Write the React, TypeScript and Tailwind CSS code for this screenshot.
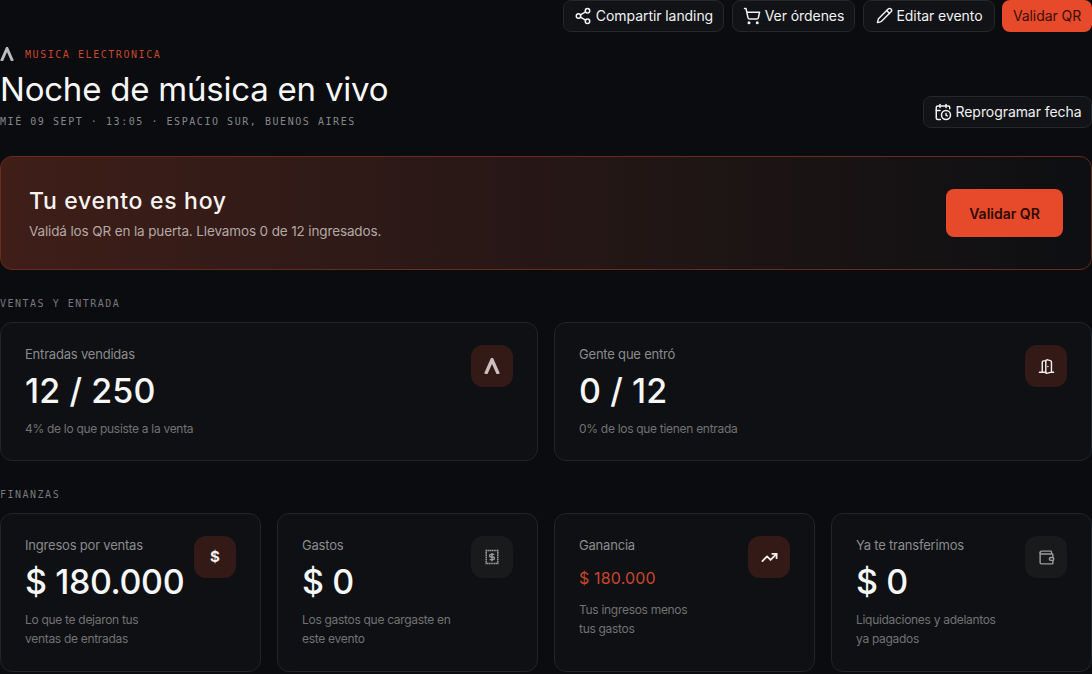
import React from 'react';
import { Share2, ShoppingCart, Pencil, CalendarClock, DoorOpen, TrendingUp, Wallet } from 'lucide-react';

const sans = "font-['Inter','Noto_Sans',sans-serif]";
const mono = "font-['DejaVu_Sans_Mono','Liberation_Mono',monospace]";

const Lambda: React.FC<{ className?: string }> = ({ className }) => (
  <svg viewBox="0 0 14 14" className={className} fill="none" stroke="currentColor" strokeWidth="2.9">
    <path d="M1.5 14 L7 1.5 L12.5 14" />
  </svg>
);

const ReceiptDollar: React.FC<{ className?: string }> = ({ className }) => (
  <svg viewBox="0 0 16 16" className={className} fill="none" stroke="currentColor">
    <rect x="2.2" y="1.5" width="11.6" height="13" strokeWidth="1.5" strokeDasharray="1.4 .4" />
    <path d="M10.3 5.4 H6.9 a1.3 1.3 0 0 0 0 2.6 h2.2 a1.3 1.3 0 0 1 0 2.6 H5.7 M8 4 v8.2" strokeWidth="1.4" />
  </svg>
);

const TopButton: React.FC<{ icon: React.ReactNode; label: string; className?: string }> = ({ icon, label, className }) => (
  <button
    type="button"
    className={`flex h-8 items-center justify-center gap-1 rounded-lg border border-[#24272b] bg-[#111316] pb-px text-[14px] tracking-[-0.005em] text-[#f2f2f2] ${className}`}
  >
    {icon}
    {label}
  </button>
);

const SectionLabel: React.FC<{ children: React.ReactNode }> = ({ children }) => (
  <p className={`${mono} text-[10px] leading-[14px] tracking-[1.5px] text-[#77797c]`}>{children}</p>
);

interface StatCardProps {
  label: string;
  value: string;
  sub: React.ReactNode;
  icon: React.ReactNode;
  accent?: boolean;
  small?: boolean;
}

const StatCard: React.FC<StatCardProps> = ({ label, value, sub, icon, accent, small }) => (
  <div className="relative rounded-xl border border-[#212428] bg-[#0e1014] px-6 pt-[21px]">
    <div
      className={`absolute right-6 top-[22px] flex h-[42px] w-[42px] items-center justify-center rounded-xl ${
        accent ? 'bg-[#341a17] text-[#f5f0ee]' : 'bg-[#181a1c] text-[#9a9b9d]'
      }`}
    >
      {icon}
    </div>
    <p className="text-[13px] leading-5 tracking-[-0.2px] text-[#8b8b8c]">{label}</p>
    {small ? (
      <p className="mt-[11px] text-[16px] leading-6 tracking-[0.01em] text-[#c9472b]">{value}</p>
    ) : (
      <p
        className={`mt-[7px] text-[34px] font-medium leading-10 text-[#f7f7f7] ${
          value.startsWith('$') ? 'tracking-[-0.4px]' : 'tracking-[0.1px]'
        }`}
      >
        {value}
      </p>
    )}
    <p className={`${small ? 'mt-[10px]' : 'mt-2'} text-[12px] leading-[19px] tracking-[-0.3px] text-[#727273]`}>{sub}</p>
  </div>
);

export default function App() {
  return (
    <div className={`${sans} h-[674px] overflow-hidden bg-[#0a0c0f]`}>
      {/* Acciones */}
      <div className="flex justify-end gap-2">
        <TopButton className="w-[161px]" icon={<Share2 size={18} />} label="Compartir landing" />
        <TopButton className="w-[123px]" icon={<ShoppingCart size={18} />} label="Ver órdenes" />
        <TopButton className="w-[132px]" icon={<Pencil size={17} />} label="Editar evento" />
        <button
          type="button"
          className="-ml-px h-8 w-[90px] rounded-lg bg-[#e64a2a] pb-px text-[14px] tracking-[-0.005em] text-[#3a0f07]"
        >
          Validar QR
        </button>
      </div>

      {/* Encabezado */}
      <div className="mt-[14px] flex items-end justify-between">
        <div className="-mb-px">
          <div className="flex h-4 items-center gap-[11px]">
            <Lambda className="h-[14px] w-[14px] text-[#bdbdbd]" />
            <span className={`${mono} text-[10px] tracking-[1.55px] text-[#c9472b]`}>MUSICA ELECTRONICA</span>
          </div>
          <h1 className="mt-[7px] text-[33px] leading-10 tracking-[-0.22px] text-[#f7f7f7]">Noche de música en vivo</h1>
          <p className={`${mono} mt-[6px] text-[10px] leading-[14px] tracking-[1.55px] text-[#86878a]`}>
            MIÉ 09 SEPT · 13:05 · ESPACIO SUR, BUENOS AIRES
          </p>
        </div>
        <TopButton className="w-[169px]" icon={<CalendarClock size={18} />} label="Reprogramar fecha" />
      </div>

      {/* Banner */}
      <div className="mt-7 flex h-[114px] items-center justify-between rounded-xl border border-[#6a2a1c] bg-gradient-to-r from-[#3f1e18] to-[#0d0f12] pl-[28px] pr-[28px]">
        <div className="pt-[2px]">
          <h2 className="text-[23px] font-medium leading-7 tracking-[0.03em] text-[#f7f3f1]">Tu evento es hoy</h2>
          <p className="mt-[6px] text-[13.5px] leading-5 tracking-[-0.13px] text-[#b3a9a6]">Validá los QR en la puerta. Llevamos 0 de 12 ingresados.</p>
        </div>
        <button
          type="button"
          className="h-12 w-[117px] rounded-lg bg-[#e64a2a] text-[14px] font-semibold text-[#2f0c05]"
        >
          Validar QR
        </button>
      </div>

      {/* Ventas */}
      <div className="mt-[27px]">
        <SectionLabel>VENTAS Y ENTRADA</SectionLabel>
      </div>
      <div className="mt-[11px] grid h-[139px] grid-cols-2 gap-4">
        <StatCard
          accent
          label="Entradas vendidas"
          value="12 / 250"
          sub="4% de lo que pusiste a la venta"
          icon={<Lambda className="h-4 w-4 text-[#cdbfbb]" />}
        />
        <StatCard
          accent
          label="Gente que entró"
          value="0 / 12"
          sub="0% de los que tienen entrada"
          icon={<DoorOpen size={17} />}
        />
      </div>

      {/* Finanzas */}
      <div className="mt-[27px]">
        <SectionLabel>FINANZAS</SectionLabel>
      </div>
      <div className="mt-[11px] grid h-[159px] grid-cols-4 gap-4">
        <StatCard
          accent
          label="Ingresos por ventas"
          value="$ 180.000"
          sub={<>Lo que te dejaron tus<br />ventas de entradas</>}
          icon={<span className="text-[15px] font-bold">$</span>}
        />
        <StatCard
          label="Gastos"
          value="$ 0"
          sub={<>Los gastos que cargaste en<br />este evento</>}
          icon={<ReceiptDollar className="h-4 w-4" />}
        />
        <StatCard
          accent
          small
          label="Ganancia"
          value="$ 180.000"
          sub={<>Tus ingresos menos<br />tus gastos</>}
          icon={<TrendingUp size={17} strokeWidth={2.5} />}
        />
        <StatCard
          label="Ya te transferimos"
          value="$ 0"
          sub={<>Liquidaciones y adelantos<br />ya pagados</>}
          icon={<Wallet size={17} />}
        />
      </div>
    </div>
  );
}
